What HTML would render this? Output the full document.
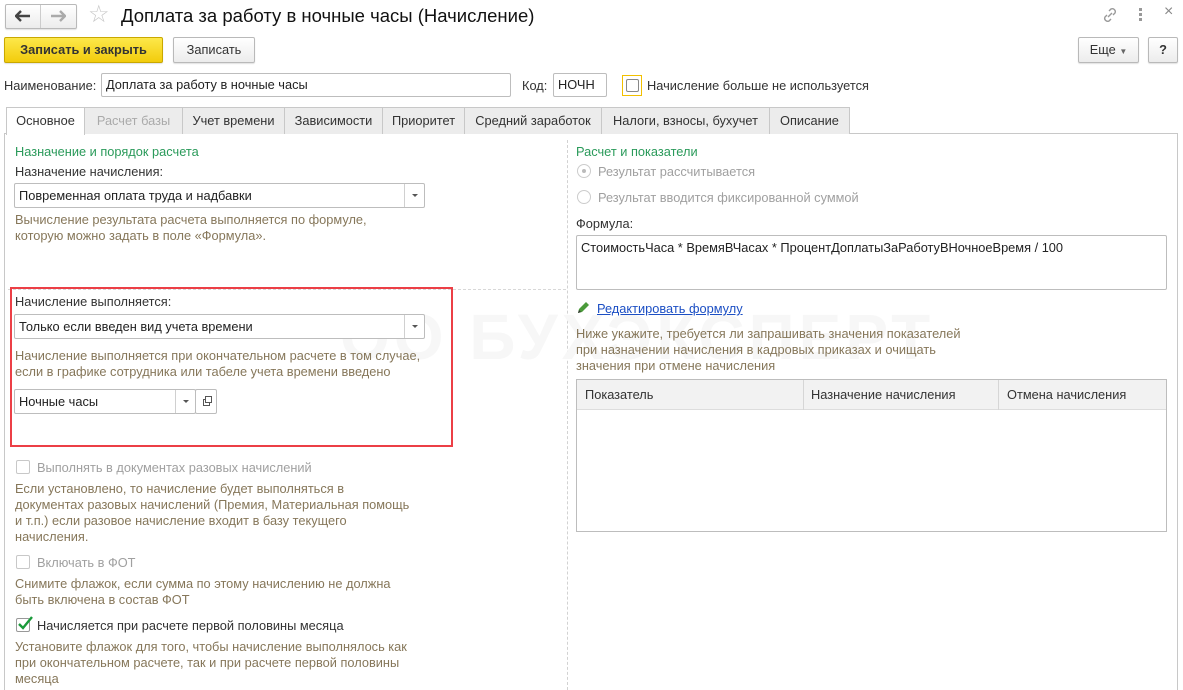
<!DOCTYPE html>
<html><head><meta charset="utf-8"><style>
*{box-sizing:border-box;margin:0;padding:0}
html,body{width:1183px;height:690px;overflow:hidden}
body{background:#fff;font-family:"Liberation Sans",Arial,sans-serif;font-size:12.8px;color:#333;position:relative}
.a{position:absolute;white-space:nowrap}
.btn{position:absolute;border:1px solid #b9b9b9;border-radius:2px;background:linear-gradient(#fff,#ececec);text-align:center;line-height:24px;color:#333;box-shadow:0 1px 1px rgba(0,0,0,.12)}
.inp{position:absolute;border:1px solid #bdbdbd;border-radius:2px;background:#fff;line-height:22px;padding-left:4px;color:#222}
.dd{position:absolute;top:0;bottom:0;width:20px;border-left:1px solid #d0d0d0}
.dd:after{content:"";position:absolute;left:7px;top:10px;border:3px solid transparent;border-top:3px solid #555}
.tab{position:absolute;top:107px;height:27px;border:1px solid #c8c8c8;border-bottom:none;background:#ececec;line-height:26px;text-align:center;color:#333}
.hint{color:#86775a;line-height:16px}
.green{color:#2a9a5a}
.cb{position:absolute;width:14px;height:14px;border:1px solid #c8c8c8;border-radius:2px;background:#fff}
.gray{color:#a0a0a0}
</style></head><body>
<div class="btn" style="left:5px;top:4px;width:72px;height:25px"></div>
<div class="a" style="left:40px;top:5px;width:1px;height:23px;background:#ccc"></div>
<svg class="a" style="left:15px;top:10px" width="16" height="12"><path d="M1 6h14M6 1L1 6l5 5" fill="none" stroke="#444" stroke-width="2.4"/></svg>
<svg class="a" style="left:50px;top:10px" width="16" height="12"><path d="M1 6h14M10 1l5 5-5 5" fill="none" stroke="#aaa" stroke-width="2.4"/></svg>
<div class="a" style="left:88px;top:1px;font-size:24px;color:#c8c8c8;line-height:28px">&#x2606;</div>
<div class="a" style="left:121px;top:4px;font-size:18.5px;color:#111;line-height:24px">Доплата за работу в ночные часы (Начисление)</div>
<svg class="a" style="left:1101px;top:6px" width="18" height="18" viewBox="0 0 18 18"><g fill="none" stroke="#999" stroke-width="1.4"><path d="M8 5l2-2a3 3 0 014 4l-2 2"/><path d="M10 13l-2 2a3 3 0 01-4-4l2-2"/><path d="M7 11l4-4"/></g></svg>
<div class="a" style="left:1139px;top:8px;width:3px;height:3px;background:#999;box-shadow:0 5px #999,0 10px #999"></div>
<div class="a" style="left:1164px;top:3px;font-size:16px;color:#888">×</div>
<div class="btn" style="left:4px;top:37px;width:159px;height:26px;background:linear-gradient(#fde84a,#f2cc0c);border-color:#c9a800;font-weight:bold;color:#333">Записать и закрыть</div>
<div class="btn" style="left:173px;top:37px;width:82px;height:26px">Записать</div>
<div class="btn" style="left:1078px;top:37px;width:61px;height:26px">Еще <span style="font-size:8px;color:#666">&#9660;</span></div>
<div class="btn" style="left:1148px;top:37px;width:30px;height:26px;font-weight:bold">?</div>
<div class="a" style="left:4px;top:78px">Наименование:</div>
<div class="inp" style="left:101px;top:73px;width:410px;height:24px">Доплата за работу в ночные часы</div>
<div class="a" style="left:522px;top:78px">Код:</div>
<div class="inp" style="left:553px;top:73px;width:54px;height:24px">НОЧН</div>
<div class="a" style="left:622px;top:75px;width:20px;height:21px;border:1px solid #f2c000"></div>
<div class="cb" style="left:626px;top:79px;width:13px;height:13px;border-color:#888"></div>
<div class="a" style="left:647px;top:78px">Начисление больше не используется</div>
<div class="a" style="left:4px;top:133px;width:1174px;height:570px;border:1px solid #c8c8c8"></div>
<div class="tab" style="left:6px;width:79px;background:#fff;height:28px">Основное</div>
<div class="tab" style="left:84px;width:99px;color:#aaa">Расчет базы</div>
<div class="tab" style="left:182px;width:103px">Учет времени</div>
<div class="tab" style="left:284px;width:99px">Зависимости</div>
<div class="tab" style="left:382px;width:83px">Приоритет</div>
<div class="tab" style="left:464px;width:138px">Средний заработок</div>
<div class="tab" style="left:601px;width:169px">Налоги, взносы, бухучет</div>
<div class="tab" style="left:769px;width:81px">Описание</div>
<div class="a" style="left:567px;top:140px;height:560px;border-left:1px dashed #d2d2d2"></div>
<div class="a" style="left:8px;top:289px;width:558px;border-top:1px dashed #d8d8d8"></div>
<div class="a" style="left:340px;top:300px;font-size:64px;font-weight:bold;color:#f7f7f7;letter-spacing:4px">ОО БУХЭКСПЕРТ</div>
<div class="a green" style="left:15px;top:144px">Назначение и порядок расчета</div>
<div class="a" style="left:15px;top:164px">Назначение начисления:</div>
<div class="inp" style="left:14px;top:183px;width:411px;height:25px;line-height:23px">Повременная оплата труда и надбавки<div class="dd" style="right:0"></div></div>
<div class="a hint" style="left:15px;top:212px">Вычисление результата расчета выполняется по формуле,<br>которую можно задать в поле «Формула».</div>
<div class="a" style="left:10px;top:287px;width:443px;height:160px;border:2px solid #ec3f46"></div>
<div class="a" style="left:15px;top:294px">Начисление выполняется:</div>
<div class="inp" style="left:14px;top:314px;width:411px;height:25px;line-height:23px">Только если введен вид учета времени<div class="dd" style="right:0"></div></div>
<div class="a hint" style="left:15px;top:348px">Начисление выполняется при окончательном расчете в том случае,<br>если в графике сотрудника или табеле учета времени введено</div>
<div class="inp" style="left:14px;top:389px;width:182px;height:25px;line-height:23px">Ночные часы<div class="dd" style="right:0"></div></div>
<div class="inp" style="left:195px;top:389px;width:22px;height:25px;padding:0"><div style="position:absolute;left:7px;top:9px;width:7px;height:7px;border:1px solid #555"></div><div style="position:absolute;left:9px;top:6px;width:7px;height:7px;border:1px solid #555;background:#fff"></div></div>
<div class="cb" style="left:16px;top:460px"></div>
<div class="a gray" style="left:37px;top:460px">Выполнять в документах разовых начислений</div>
<div class="a hint" style="left:15px;top:481px">Если установлено, то начисление будет выполняться в<br>документах разовых начислений (Премия, Материальная помощь<br>и т.п.) если разовое начисление входит в базу текущего<br>начисления.</div>
<div class="cb" style="left:16px;top:555px"></div>
<div class="a gray" style="left:37px;top:555px">Включать в ФОТ</div>
<div class="a hint" style="left:15px;top:576px">Снимите флажок, если сумма по этому начислению не должна<br>быть включена в состав ФОТ</div>
<div class="cb" style="left:16px;top:618px;border-color:#999"></div>
<svg class="a" style="left:16px;top:614px" width="18" height="18"><path d="M3 10l4 4 9-11" fill="none" stroke="#1a9a3a" stroke-width="2.4"/></svg>
<div class="a" style="left:37px;top:618px">Начисляется при расчете первой половины месяца</div>
<div class="a hint" style="left:15px;top:639px">Установите флажок для того, чтобы начисление выполнялось как<br>при окончательном расчете, так и при расчете первой половины<br>месяца</div>
<div class="a green" style="left:576px;top:144px">Расчет и показатели</div>
<div class="a" style="left:577px;top:164px;width:14px;height:14px;border:1px solid #ccc;border-radius:50%"><div style="margin:4px;width:4px;height:4px;border-radius:50%;background:#bbb"></div></div>
<div class="a gray" style="left:598px;top:164px">Результат рассчитывается</div>
<div class="a" style="left:577px;top:190px;width:14px;height:14px;border:1px solid #ccc;border-radius:50%"></div>
<div class="a gray" style="left:598px;top:190px">Результат вводится фиксированной суммой</div>
<div class="a" style="left:576px;top:216px">Формула:</div>
<div class="inp" style="left:576px;top:235px;width:591px;height:55px;padding-top:1px">СтоимостьЧаса * ВремяВЧасах * ПроцентДоплатыЗаРаботуВНочноеВремя / 100</div>
<svg class="a" style="left:576px;top:301px" width="14" height="14"><path d="M2 12l1-4 7-7 3 3-7 7z" fill="#4a9a3a"/><path d="M2 12l1-3 2 2z" fill="#333"/></svg>
<div class="a" style="left:597px;top:301px;color:#1c4fc4;text-decoration:underline">Редактировать формулу</div>
<div class="a hint" style="left:576px;top:326px">Ниже укажите, требуется ли запрашивать значения показателей<br>при назначении начисления в кадровых приказах и очищать<br>значения при отмене начисления</div>
<div class="a" style="left:576px;top:379px;width:591px;height:153px;border:1px solid #bdbdbd"></div>
<div class="a" style="left:577px;top:380px;width:589px;height:30px;background:#f2f2f2;border-bottom:1px solid #ddd"></div>
<div class="a" style="left:803px;top:380px;height:30px;border-left:1px solid #d6d6d6"></div>
<div class="a" style="left:998px;top:380px;height:30px;border-left:1px solid #d6d6d6"></div>
<div class="a" style="left:585px;top:387px">Показатель</div>
<div class="a" style="left:811px;top:387px">Назначение начисления</div>
<div class="a" style="left:1007px;top:387px">Отмена начисления</div>
</body></html>
